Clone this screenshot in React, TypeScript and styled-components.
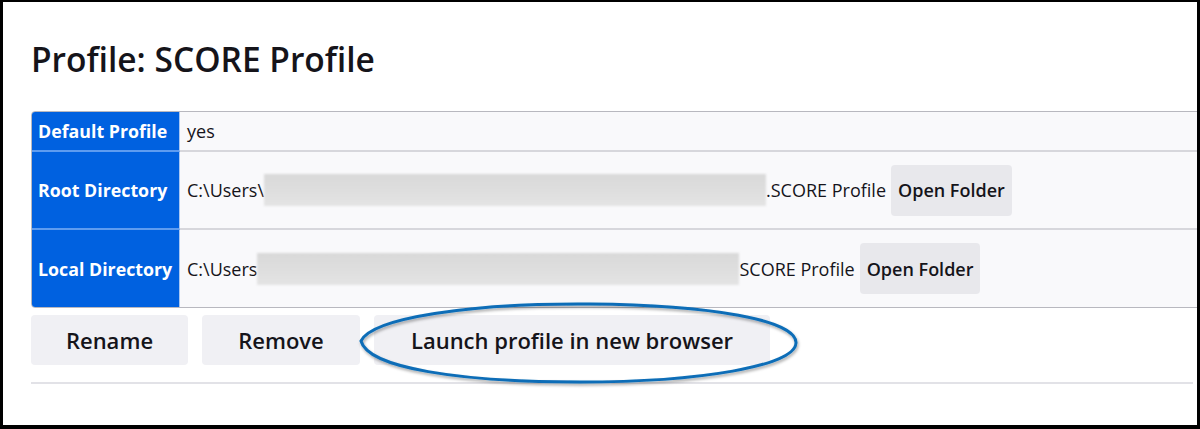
import React from "react";
import styled, { createGlobalStyle } from "styled-components";

const Global = createGlobalStyle`
  html, body { margin: 0; padding: 0; background: #fff; }
  body { font-family: "Open Sans", "Noto Sans", sans-serif; color: #15141a; }
`;

const Frame = styled.div`
  position: relative;
  box-sizing: border-box;
  width: 1200px;
  height: 429px;
  border-style: solid;
  border-color: #000;
  border-width: 2px 3px 4px 3px;
  overflow: hidden;
  background: #fff;
  padding: 0 0 0 28px;
`;

const Title = styled.h1`
  margin: 0;
  padding-top: 35px;
  height: 73px;
  box-sizing: border-box;
  font-size: 33.5px;
  line-height: 44px;
  font-weight: 600;
  color: #15141a;
`;

const Table = styled.table`
  margin-top: 36px;
  width: calc(100% + 20px);
  border-collapse: separate;
  border-spacing: 0;
  border: 1px solid #b8b8bf;
  border-radius: 4px;
  overflow: hidden;
  background: #f9f9fb;
`;

const Row = styled.tr<{ $h: number }>`
  height: ${(p) => p.$h}px;
`;

const Th = styled.th<{ $last?: boolean }>`
  box-sizing: border-box;
  width: 148px;
  background: #0061e0;
  color: #fff;
  text-align: left;
  font-size: 17.8px;
  font-weight: 700;
  padding: 0 0 0 6px;
  white-space: nowrap;
  border-bottom: ${(p) => (p.$last ? "none" : "2px solid #5e9cf0")};
  border-right: 1px solid #a9c7f2;
`;

const Td = styled.td<{ $last?: boolean }>`
  padding: 0 0 0 7px;
  font-size: 18px;
  color: #15141a;
  border-bottom: ${(p) => (p.$last ? "none" : "2px solid #d7d7dc")};
`;

const Cell = styled.div`
  display: flex;
  align-items: center;
  white-space: nowrap;
`;

const Redacted = styled.span`
  display: inline-block;
  height: 32px;
  background: linear-gradient(180deg, #d9d9d9 0%, #dedede 50%, #e4e4e4 100%);
  filter: blur(1px);
`;

const SmallButton = styled.button`
  margin-left: 5px;
  height: 51px;
  padding: 0 7px;
  border: none;
  border-radius: 4px;
  background: rgba(207, 207, 216, 0.4);
  font-family: inherit;
  font-size: 18px;
  font-weight: 600;
  color: #15141a;
`;

const Actions = styled.div`
  display: flex;
  gap: 14px;
  margin-top: 7px;
`;

const BigButton = styled.button<{ $w: number }>`
  width: ${(p) => p.$w}px;
  height: 50px;
  border: none;
  border-radius: 4px;
  background: #f0f0f4;
  font-family: inherit;
  font-size: 22px;
  font-weight: 600;
  color: #15141a;
`;

const Rule = styled.hr`
  margin: 17px 0 0 0;
  border: none;
  border-top: 2px solid #e2e2e7;
  width: 1162px;
`;

const Annotation = styled.svg`
  position: absolute;
  left: 0;
  top: 0;
  pointer-events: none;
`;

export default function App() {
  return (
    <>
      <Global />
      <Frame>
        <Title>Profile: SCORE Profile</Title>
        <Table>
          <tbody>
            <Row $h={40}>
              <Th>Default Profile</Th>
              <Td>
                <Cell>yes</Cell>
              </Td>
            </Row>
            <Row $h={78}>
              <Th>Root Directory</Th>
              <Td>
                <Cell>
                  C:\Users\
                  <Redacted style={{ width: 502 }} />
                  .SCORE Profile
                  <SmallButton>Open Folder</SmallButton>
                </Cell>
              </Td>
            </Row>
            <Row $h={77}>
              <Th $last>Local Directory</Th>
              <Td $last>
                <Cell>
                  C:\Users
                  <Redacted style={{ width: 482 }} />
                  SCORE Profile
                  <SmallButton>Open Folder</SmallButton>
                </Cell>
              </Td>
            </Row>
          </tbody>
        </Table>
        <Actions>
          <BigButton $w={157}>Rename</BigButton>
          <BigButton $w={158}>Remove</BigButton>
          <BigButton $w={396}>Launch profile in new browser</BigButton>
        </Actions>
        <Rule />
        <Annotation width="1194" height="423" viewBox="3 2 1194 423">
          <defs>
            <filter id="sh" x="-10%" y="-30%" width="120%" height="160%">
              <feDropShadow dx="1" dy="2" stdDeviation="1.5" floodColor="#000" floodOpacity="0.35" />
            </filter>
          </defs>
          <path
            d="M 361 341 C 372 318, 470 303, 590 304 C 710 305, 797 320, 796 343 C 795 366, 700 382, 580 382 C 460 382, 368 368, 361 341 Z"
            fill="none"
            stroke="#0b6db7"
            strokeWidth="3"
            filter="url(#sh)"
          />
        </Annotation>
      </Frame>
    </>
  );
}
